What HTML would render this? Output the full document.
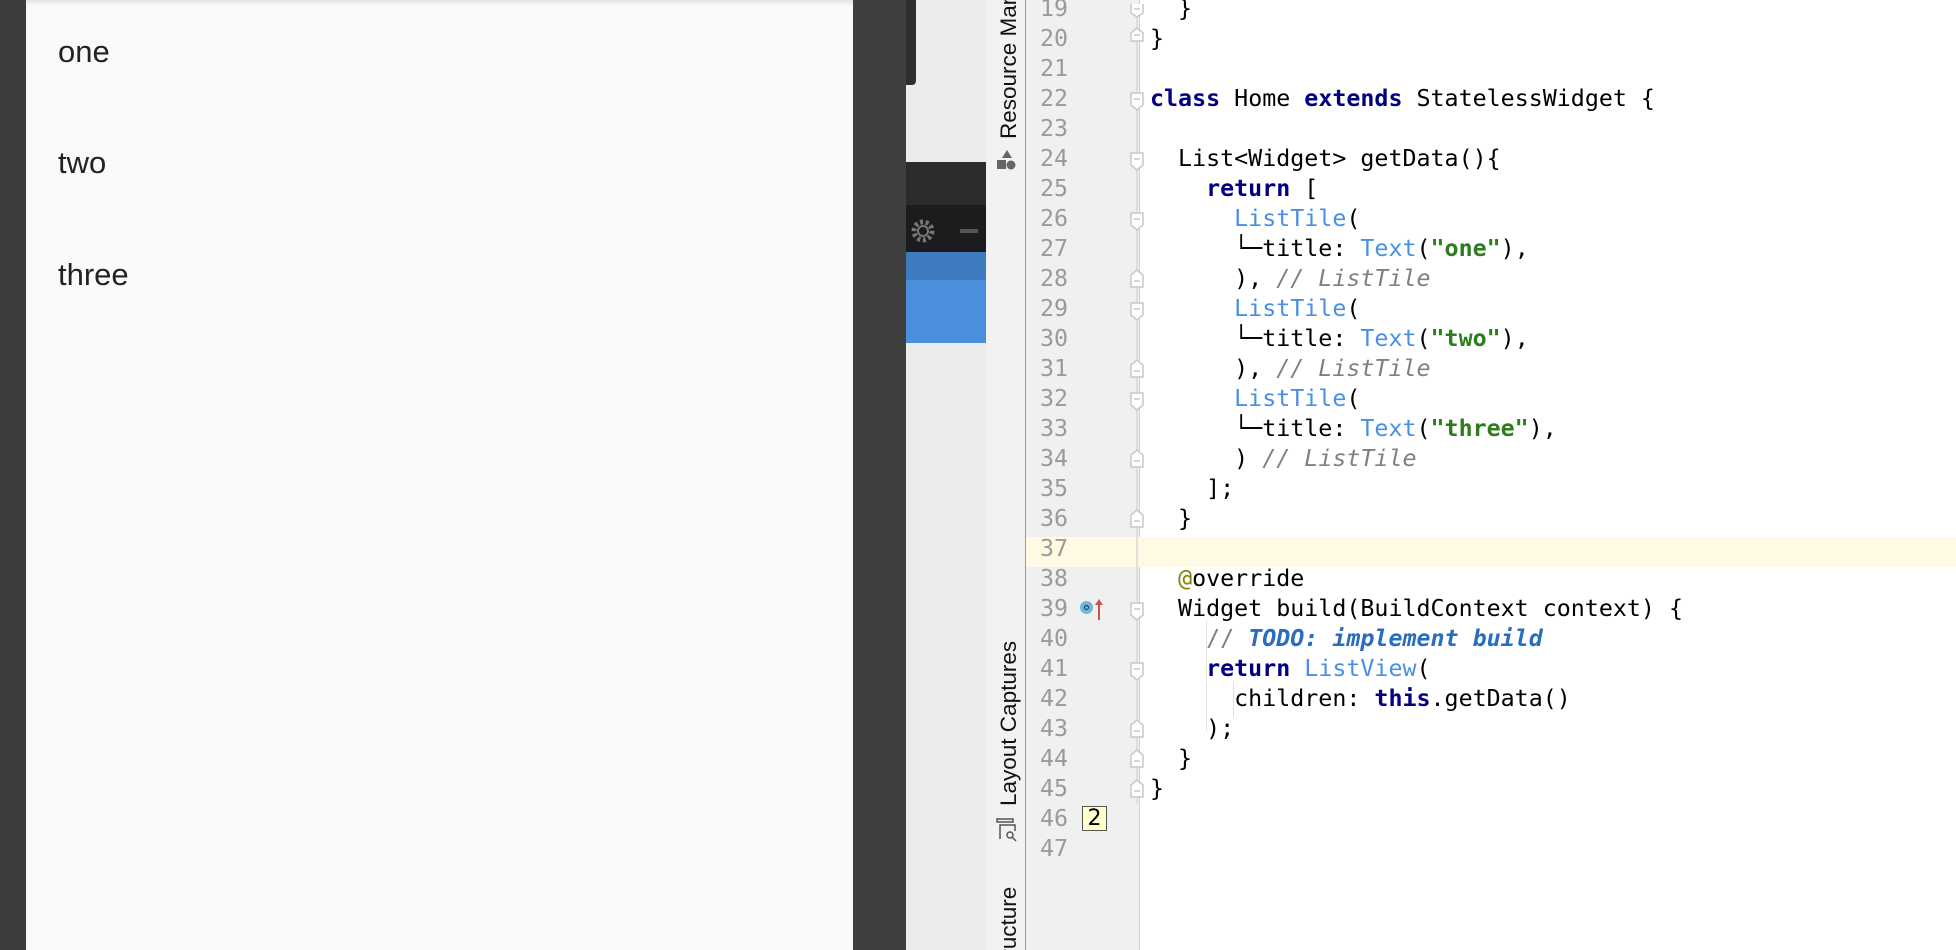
<!DOCTYPE html>
<html><head><meta charset="utf-8"><style>
*{margin:0;padding:0;box-sizing:border-box}
html,body{width:1956px;height:950px;overflow:hidden}
body{position:relative;background:#fff;font-family:"Liberation Sans",sans-serif}
.abs{position:absolute}
.mono{font-family:"DejaVu Sans Mono","Liberation Mono",monospace;font-size:23.3px;white-space:pre}
.ln{position:absolute;left:1028px;width:40px;text-align:right;color:#9a9a9a;height:30px;line-height:30px}
.cl{position:absolute;left:1150px;height:30px;line-height:30px;color:#000}
.k{color:#000080;font-weight:bold}
.b{color:#4a90e2}
.s{color:#2e7d1c;font-weight:bold}
.c{color:#808080;font-style:italic}
.t{color:#2a6cbf;font-style:italic;font-weight:bold}
.lt{font-size:31px;color:#222;position:absolute;left:58px}
.rot{position:absolute;left:0;transform-origin:0 0;transform:rotate(-90deg);font-size:22.5px;color:#111;white-space:nowrap;line-height:30px}
</style></head><body>
<div class="abs" style="left:0;top:0;width:26px;height:950px;background:#3d3d3d"></div>
<div class="abs" style="left:26px;top:0;width:827px;height:950px;background:#fafafa;box-shadow:inset 0 6px 6px -4px rgba(0,0,0,.12)"></div>
<div class="lt" style="top:34px">one</div>
<div class="lt" style="top:145px">two</div>
<div class="lt" style="top:257px">three</div>
<div class="abs" style="left:853px;top:0;width:53px;height:950px;background:#3f3f3f"></div>
<div class="abs" style="left:906px;top:0;width:80px;height:950px;background:#ececec"></div>
<div class="abs" style="left:906px;top:0;width:10px;height:85px;background:#2e2e2e;border-radius:0 0 4px 0"></div>
<div class="abs" style="left:906px;top:162px;width:80px;height:43px;background:#2c2c2c"></div>
<div class="abs" style="left:906px;top:205px;width:80px;height:47px;background:#1c1c1e"></div>
<svg class="abs" style="left:910px;top:218px" width="26" height="26"><circle cx="13" cy="13" r="9" fill="none" stroke="#777" stroke-width="5" stroke-dasharray="3 2.6"/><circle cx="13" cy="13" r="5" fill="none" stroke="#777" stroke-width="2"/></svg>
<div class="abs" style="left:960px;top:229px;width:18px;height:4px;background:#555"></div>
<div class="abs" style="left:906px;top:252px;width:80px;height:28px;background:#3f7bc0"></div>
<div class="abs" style="left:906px;top:280px;width:80px;height:63px;background:#4a8fdc"></div>
<div class="abs" style="left:986px;top:0;width:41px;height:950px;background:#f2f2f2;border-right:2px solid #9c9c9c"></div>
<div class="abs" style="left:1026px;top:0;width:114px;height:950px;background:#f0f0f0;border-right:1px solid #cfcfcf"></div>
<div class="abs" style="left:994px;top:0;width:30px;height:950px;overflow:hidden">
<div class="rot" style="top:139px">Resource Manager</div>
<div class="rot" style="top:806px">Layout Captures</div>
<div class="rot" style="top:978px">Structure</div>
</div>
<svg class="abs" style="left:995px;top:148px" width="24" height="24"><polygon points="12,2 17,10 7,10" fill="#666"/><rect x="2" y="12" width="9" height="9" fill="#666"/><circle cx="16" cy="17" r="4.5" fill="#666"/></svg>
<svg class="abs" style="left:995px;top:817px" width="24" height="26" fill="none" stroke="#555" stroke-width="1.5"><rect x="2" y="2" width="16" height="3"/><path d="M5,22 V8 H20 V14"/><circle cx="15" cy="18" r="3"/><line x1="17" y1="20" x2="21" y2="24"/></svg>
<div class="abs" style="left:1026px;top:537px;width:930px;height:30px;background:#fffae3"></div>
<div class="mono abs" style="left:0;top:4px;width:1956px;height:900px">
<div class="ln" style="top:-10px">19</div><div class="cl" style="top:-10px">  }</div>
<div class="ln" style="top:20px">20</div><div class="cl" style="top:20px">}</div>
<div class="ln" style="top:50px">21</div>
<div class="ln" style="top:80px">22</div><div class="cl" style="top:80px"><span class="k">class</span> Home <span class="k">extends</span> StatelessWidget {</div>
<div class="ln" style="top:110px">23</div>
<div class="ln" style="top:140px">24</div><div class="cl" style="top:140px">  List&lt;Widget&gt; getData(){</div>
<div class="ln" style="top:170px">25</div><div class="cl" style="top:170px">    <span class="k">return</span> [</div>
<div class="ln" style="top:200px">26</div><div class="cl" style="top:200px">      <span class="b">ListTile</span>(</div>
<div class="ln" style="top:230px">27</div><div class="cl" style="top:230px">      └─title: <span class="b">Text</span>(<span class="s">"one"</span>),</div>
<div class="ln" style="top:260px">28</div><div class="cl" style="top:260px">      ), <span class="c">// ListTile</span></div>
<div class="ln" style="top:290px">29</div><div class="cl" style="top:290px">      <span class="b">ListTile</span>(</div>
<div class="ln" style="top:320px">30</div><div class="cl" style="top:320px">      └─title: <span class="b">Text</span>(<span class="s">"two"</span>),</div>
<div class="ln" style="top:350px">31</div><div class="cl" style="top:350px">      ), <span class="c">// ListTile</span></div>
<div class="ln" style="top:380px">32</div><div class="cl" style="top:380px">      <span class="b">ListTile</span>(</div>
<div class="ln" style="top:410px">33</div><div class="cl" style="top:410px">      └─title: <span class="b">Text</span>(<span class="s">"three"</span>),</div>
<div class="ln" style="top:440px">34</div><div class="cl" style="top:440px">      ) <span class="c">// ListTile</span></div>
<div class="ln" style="top:470px">35</div><div class="cl" style="top:470px">    ];</div>
<div class="ln" style="top:500px">36</div><div class="cl" style="top:500px">  }</div>
<div class="ln" style="top:530px">37</div>
<div class="ln" style="top:560px">38</div><div class="cl" style="top:560px">  <span style="color:#808000">@</span>override</div>
<div class="ln" style="top:590px">39</div><div class="cl" style="top:590px">  Widget build(BuildContext context) {</div>
<div class="ln" style="top:620px">40</div><div class="cl" style="top:620px">    <span class="c" style="font-style:normal">// </span><span class="t">TODO: implement build</span></div>
<div class="ln" style="top:650px">41</div><div class="cl" style="top:650px">    <span class="k">return</span> <span class="b">ListView</span>(</div>
<div class="ln" style="top:680px">42</div><div class="cl" style="top:680px">      children: <span class="k">this</span>.getData()</div>
<div class="ln" style="top:710px">43</div><div class="cl" style="top:710px">    );</div>
<div class="ln" style="top:740px">44</div><div class="cl" style="top:740px">  }</div>
<div class="ln" style="top:770px">45</div><div class="cl" style="top:770px">}</div>
<div class="ln" style="top:800px">46</div>
<div class="ln" style="top:830px">47</div>
</div>
<div class="abs" style="left:1082px;top:806px;width:25px;height:25px;background:#ffffcc;border:1px solid #555;font-size:22px;line-height:23px;text-align:center;font-family:'DejaVu Sans',sans-serif">2</div>
<div class="abs" style="left:1080px;top:601px;width:13px;height:13px;border-radius:50%;background:#6fb7d8"></div>
<div class="abs" style="left:1084px;top:605px;width:5px;height:5px;border-radius:50%;border:1px solid #234"></div>
<svg class="abs" style="left:1094px;top:598px" width="10" height="24"><line x1="5" y1="3" x2="5" y2="22" stroke="#d05050" stroke-width="2"/><polygon points="1,7 5,1 9,7" fill="#d05050"/></svg>
<svg class="abs" style="left:1128px;top:4px" width="20" height="800" fill="#fff" stroke="#c8c8c8" stroke-width="1.5">
<path d="M9,0 V800" stroke="#d8d8d8" fill="none"/>
<path d="M3,-3 V9 L9,13 L15,9 V-3 Z M6,5 H12"/>
<path d="M3,37 V29 L9,24 L15,29 V37 Z M6,31 H12"/>
<path d="M3,89 V101 L9,106 L15,101 V89 Z M6,95 H12"/>
<path d="M3,149 V161 L9,166 L15,161 V149 Z M6,155 H12"/>
<path d="M3,209 V221 L9,226 L15,221 V209 Z M6,215 H12"/>
<path d="M3,283 V271 L9,266 L15,271 V283 Z M6,277 H12"/>
<path d="M3,299 V311 L9,316 L15,311 V299 Z M6,305 H12"/>
<path d="M3,373 V361 L9,356 L15,361 V373 Z M6,367 H12"/>
<path d="M3,389 V401 L9,406 L15,401 V389 Z M6,395 H12"/>
<path d="M3,463 V451 L9,446 L15,451 V463 Z M6,457 H12"/>
<path d="M3,523 V511 L9,506 L15,511 V523 Z M6,517 H12"/>
<path d="M3,599 V611 L9,616 L15,611 V599 Z M6,605 H12"/>
<path d="M3,659 V671 L9,676 L15,671 V659 Z M6,665 H12"/>
<path d="M3,733 V721 L9,716 L15,721 V733 Z M6,727 H12"/>
<path d="M3,763 V751 L9,746 L15,751 V763 Z M6,757 H12"/>
<path d="M3,793 V781 L9,776 L15,781 V793 Z M6,787 H12"/>
</svg>
<div class="abs" style="left:1206px;top:621px;width:1px;height:110px;background:#e0e0e0"></div>
<div class="abs" style="left:1233px;top:681px;width:1px;height:36px;background:#e0e0e0"></div>
</body></html>
